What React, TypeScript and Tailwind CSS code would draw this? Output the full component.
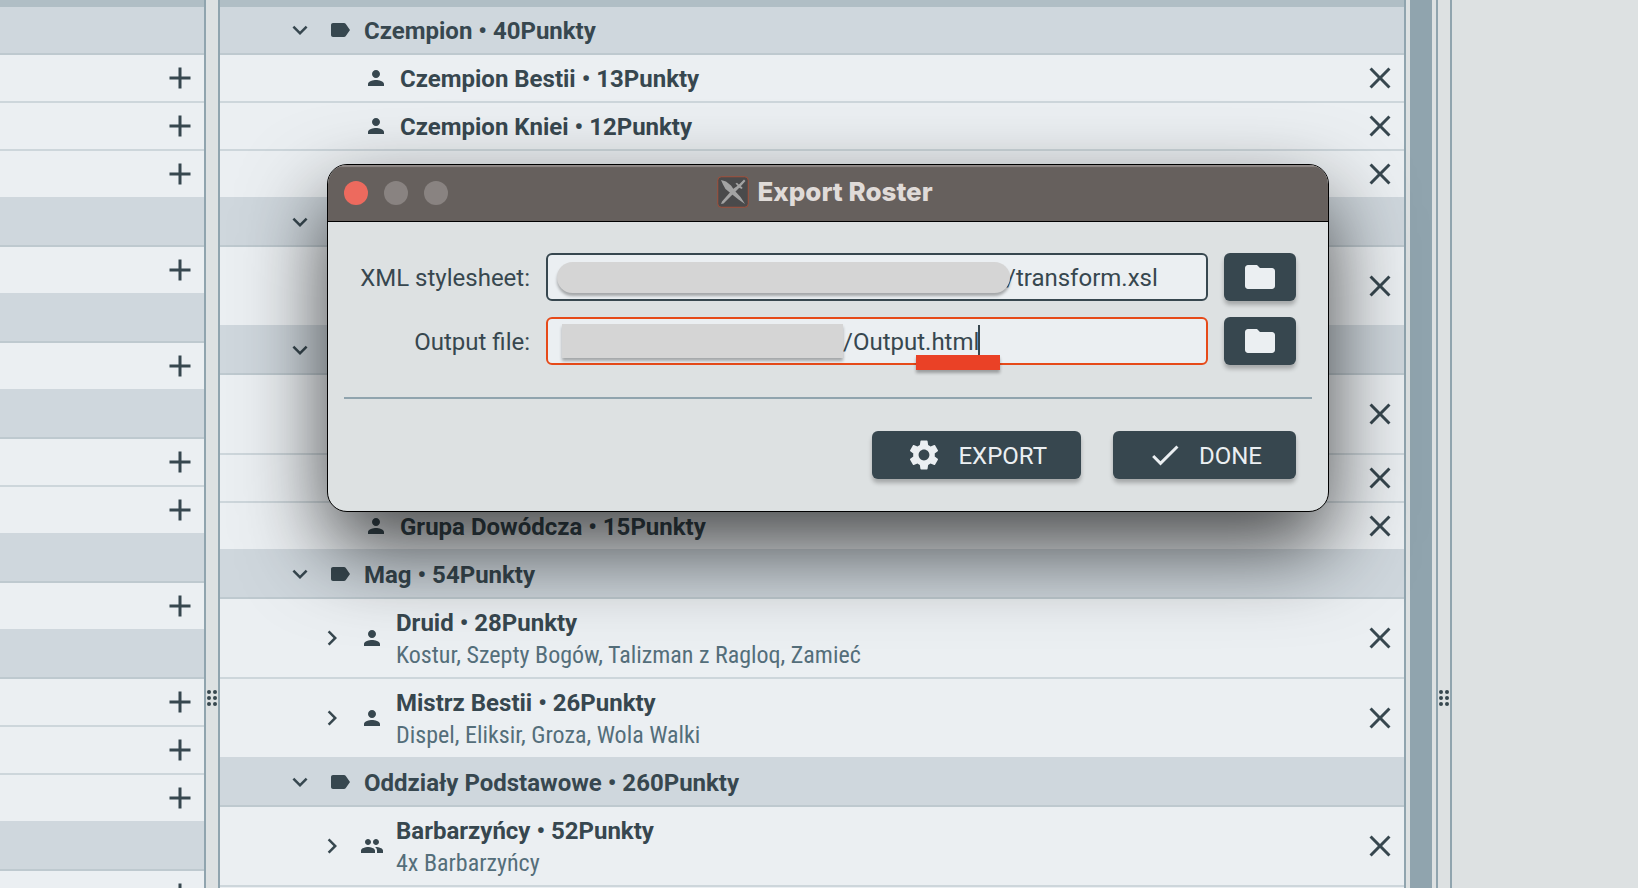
import { useState } from "react";
import type { ReactNode } from "react";
import {
  MdAdd,
  MdCheck,
  MdClose,
  MdChevronRight,
  MdExpandMore,
  MdFolder,
  MdLabel,
  MdPeople,
  MdPerson,
  MdSettings,
} from "react-icons/md";

type Entry =
  | { kind: "category"; title?: string }
  | { kind: "unit"; title?: string }
  | { kind: "detailed"; title?: string; note?: string; group?: boolean };

const catalogue: ("category" | "unit")[] = [
  "category", "unit", "unit", "unit",
  "category", "unit",
  "category", "unit",
  "category", "unit", "unit",
  "category", "unit",
  "category", "unit", "unit", "unit",
  "category", "unit",
];

const roster: Entry[] = [
  { kind: "category", title: "Czempion • 40Punkty" },
  { kind: "unit", title: "Czempion Bestii • 13Punkty" },
  { kind: "unit", title: "Czempion Kniei • 12Punkty" },
  { kind: "unit" },
  { kind: "category" },
  { kind: "detailed" },
  { kind: "category" },
  { kind: "detailed" },
  { kind: "unit" },
  { kind: "unit", title: "Grupa Dowódcza • 15Punkty" },
  { kind: "category", title: "Mag • 54Punkty" },
  { kind: "detailed", title: "Druid • 28Punkty", note: "Kostur, Szepty Bogów, Talizman z Ragloq, Zamieć" },
  { kind: "detailed", title: "Mistrz Bestii • 26Punkty", note: "Dispel, Eliksir, Groza, Wola Walki" },
  { kind: "category", title: "Oddziały Podstawowe • 260Punkty" },
  { kind: "detailed", title: "Barbarzyńcy • 52Punkty", note: "4x Barbarzyńcy", group: true },
  { kind: "unit" },
];

function rowTone(category: boolean, beforeCategory: boolean) {
  if (category) return "bg-[#cfd7dd] border-[#bec9cf]";
  return beforeCategory ? "bg-[#ebeff2] border-[#cfd7dd]" : "bg-[#ebeff2] border-[#cdd6db]";
}

function Splitter() {
  return (
    <div className="flex w-4 shrink-0 flex-col items-center border-x-2 border-[#90a4ae] pt-[690px]">
      <svg width="10" height="16" viewBox="0 0 10 16" className="shrink-0 fill-[#37474f]" aria-hidden="true">
        {[2, 8, 14].map((y) => (
          <g key={y}>
            <circle cx="2" cy={y} r="2" />
            <circle cx="8" cy={y} r="2" />
          </g>
        ))}
      </svg>
    </div>
  );
}

function CatalogueList() {
  return (
    <ul className="w-[204px] shrink-0 overflow-hidden border-t-7 border-[#b0bec5]">
      {catalogue.map((kind, i) => (
        <li
          key={i}
          className={`flex h-12 items-center justify-end border-b-2 pr-1.5 ${rowTone(kind === "category", catalogue[i + 1] === "category")}`}
        >
          {kind === "unit" && (
            <button type="button" aria-label="Add">
              <MdAdd size={36} />
            </button>
          )}
        </li>
      ))}
    </ul>
  );
}

function RemoveButton() {
  return (
    <button type="button" aria-label="Remove" className="ml-auto">
      <MdClose size={36} />
    </button>
  );
}

function RosterRow({ entry, beforeCategory }: { entry: Entry; beforeCategory: boolean }) {
  const tone = rowTone(entry.kind === "category", beforeCategory);
  if (entry.kind === "category") {
    return (
      <li className={`flex h-12 items-center border-b-2 pl-[65px] ${tone}`}>
        <MdExpandMore size={30} />
        <MdLabel size={24} className="ml-[13px]" />
        <span className="ml-3 pt-0.5 font-bold">{entry.title}</span>
      </li>
    );
  }
  if (entry.kind === "unit") {
    return (
      <li className={`flex h-12 items-center border-b-2 pr-1.5 pl-36 ${tone}`}>
        {entry.title && (
          <>
            <MdPerson size={24} />
            <span className="ml-3 pt-0.5 font-bold">{entry.title}</span>
          </>
        )}
        <RemoveButton />
      </li>
    );
  }
  return (
    <li className={`flex h-20 items-center border-b-2 pr-1.5 pl-[97px] ${tone}`}>
      {entry.title && (
        <>
          <MdChevronRight size={30} />
          {entry.group ? <MdPeople size={24} className="ml-[13px]" /> : <MdPerson size={24} className="ml-[13px]" />}
          <div className="ml-3 pt-0.5 leading-8">
            <div className="font-bold">{entry.title}</div>
            <div className="font-['Roboto_Condensed','Roboto',sans-serif] text-[#546e7a]">{entry.note}</div>
          </div>
        </>
      )}
      <RemoveButton />
    </li>
  );
}

function AppIcon() {
  return (
    <svg width="32" height="32" viewBox="0 0 32 32" aria-hidden="true">
      <rect x="0.75" y="0.75" width="30.5" height="30.5" rx="3.5" fill="#4a4a4b" stroke="#a2503b" />
      <g fill="#a3a3a3">
        <path d="M4 4 L9 5.500 L14 9.500 L17.500 14.500 L23.500 21 L28 28 L21.500 23.500 L14 17.500 L8.500 13 L6 8.500 Z" />
        <path d="M27 3.500 L28.500 5 L23.500 10.500 L19 15 L6.500 27.500 L4 28 L5 25.500 L16 13 L21 9.500 Z" />
        <path d="M18.500 7.500 L20 6.800 L22 8.800 L25.500 11.500 L25 13 L22.500 12 Z" />
      </g>
    </svg>
  );
}

function FileRow({
  id,
  label,
  active,
  initial,
  inputClass,
  children,
}: {
  id: string;
  label: string;
  active?: boolean;
  initial: string;
  inputClass: string;
  children: ReactNode;
}) {
  const [value, setValue] = useState(initial);
  return (
    <div className="flex items-center gap-4">
      <label htmlFor={id} className="w-[186px] pt-0.5 text-right">
        {label}
      </label>
      <div className="relative flex-1">
        <input
          id={id}
          type="text"
          value={value}
          onChange={(e) => setValue(e.target.value)}
          className={`block h-12 w-full rounded-md border-2 bg-[#ebeff2] pt-0.5 pr-3 outline-none ${active ? "border-[#e64a19]" : "border-[#37474f]"} ${inputClass}`}
        />
        {children}
      </div>
      <button
        type="button"
        aria-label={`Browse: ${label}`}
        className="flex h-12 w-[72px] items-center justify-center rounded-md bg-[#37474f] text-[#ebeff2] shadow-[0_4px_4px_rgba(0,0,0,0.25)]"
      >
        <MdFolder size={36} />
      </button>
    </div>
  );
}

function ActionButton({ icon, children }: { icon: ReactNode; children: ReactNode }) {
  return (
    <button
      type="button"
      className="flex h-12 items-center gap-4 rounded-md bg-[#37474f] px-[34px] text-[#ebeff2] shadow-[0_4px_4px_rgba(0,0,0,0.25)]"
    >
      {icon}
      <span className="pt-0.5">{children}</span>
    </button>
  );
}

function ExportDialog() {
  return (
    <section
      role="dialog"
      aria-labelledby="export-title"
      className="absolute top-[164px] left-[327px] w-[1002px] overflow-hidden rounded-[20px] border border-black bg-[#dde1e2] shadow-[0_36px_84px_rgba(0,0,0,0.7)]"
    >
      <header className="relative flex h-[57px] items-center justify-center border-b border-black bg-[#66605d] shadow-[inset_0_2px_1px_#8f8987]">
        <div className="absolute left-4 flex gap-4">
          <button type="button" aria-label="Close" className="size-6 rounded-full bg-[#ed6a5e]" />
          <button type="button" aria-label="Minimise" className="size-6 rounded-full bg-[#898381]" />
          <button type="button" aria-label="Zoom" className="size-6 rounded-full bg-[#898381]" />
        </div>
        <div className="flex items-center gap-2 pr-1.5 pb-0.5">
          <AppIcon />
          <h1
            id="export-title"
            className="font-['Inter',sans-serif] text-[26px] leading-8 font-extrabold text-[#e0dbd8]"
          >
            Export Roster
          </h1>
        </div>
      </header>
      <div className="px-4 pt-[31px] pb-8">
        <div className="flex flex-col gap-4 pr-4">
          <FileRow id="stylesheet" label="XML stylesheet:" initial="/transform.xsl" inputClass="pl-[458px]">
            <span className="absolute top-[9px] left-[11px] h-[31px] w-[453px] rounded-full bg-[#d5d5d5] shadow-[0_3px_3px_rgba(0,0,0,0.3)]" />
          </FileRow>
          <FileRow id="output" label="Output file:" active initial="/Output.html" inputClass="pl-[295px]">
            <span className="absolute top-[7px] left-4 h-[34px] w-[281px] bg-[#d5d5d5] shadow-[0_3px_3px_rgba(0,0,0,0.3)]" />
            <span className="absolute top-2 left-[432px] h-[30px] w-0.5 bg-[#37474f]" />
            <span className="absolute top-[38px] left-[370px] h-[15px] w-[84px] bg-[#ea4126] shadow-[0_3px_3px_rgba(0,0,0,0.3)]" />
          </FileRow>
        </div>
        <hr className="mt-8 border-t-2 border-[#90a4ae]" />
        <div className="mt-8 flex justify-end gap-8 pr-4">
          <ActionButton icon={<MdSettings size={36} />}>EXPORT</ActionButton>
          <ActionButton icon={<MdCheck size={36} />}>DONE</ActionButton>
        </div>
      </div>
    </section>
  );
}

export default function App() {
  return (
    <main className="relative flex h-screen overflow-hidden bg-[#dde1e2] font-['Roboto',sans-serif] text-[24px] leading-8 text-[#37474f]">
      <CatalogueList />
      <Splitter />
      <ul className="min-w-0 flex-1 overflow-hidden border-t-7 border-[#b0bec5]">
        {roster.map((entry, i) => (
          <RosterRow key={i} entry={entry} beforeCategory={roster[i + 1]?.kind === "category"} />
        ))}
      </ul>
      <div className="flex w-8 shrink-0 border-l-2 border-[#90a4ae] px-1">
        <div className="flex-1 bg-[#90a4ae]" />
      </div>
      <Splitter />
      <aside className="w-[186px] shrink-0" />
      <ExportDialog />
    </main>
  );
}
